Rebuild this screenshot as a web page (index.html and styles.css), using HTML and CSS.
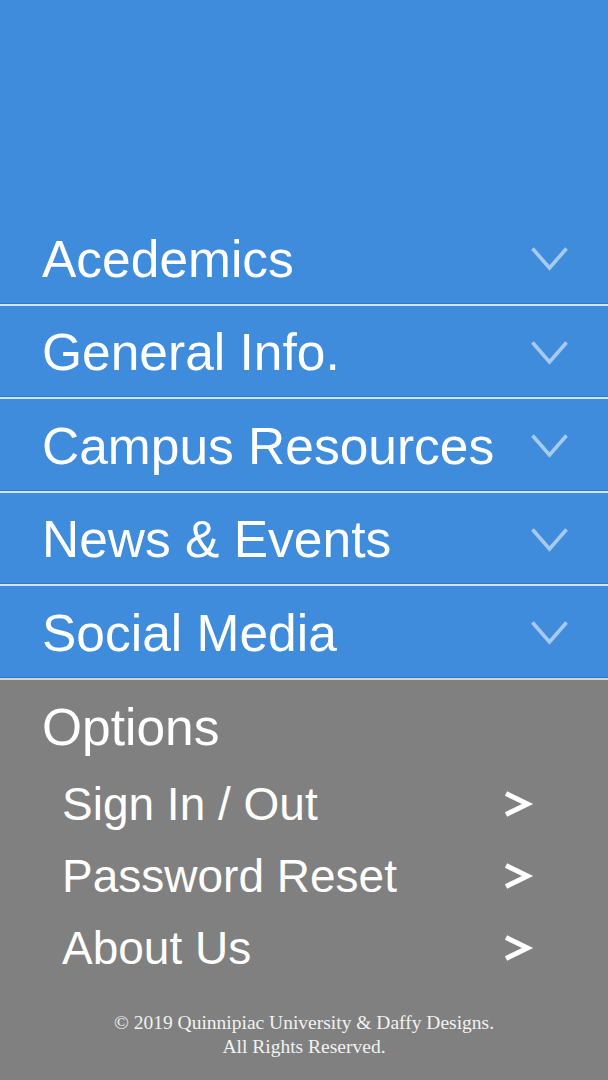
FILE: index.html
```html
<!DOCTYPE html>
<html lang="en">
<head>
<meta charset="utf-8">
<title>Menu</title>
<link rel="stylesheet" href="styles.css">
</head>
<body>
<div class="screen">
  <div class="top-space"></div>
  <nav class="nav">
    <div class="nav-item"><span class="nav-label">Acedemics</span><svg class="chev" viewBox="0 0 39 26" width="39" height="26"><polyline points="2.5,2.5 19.5,22 36.5,2.5"/></svg></div>
    <div class="nav-item"><span class="nav-label">General Info.</span><svg class="chev" viewBox="0 0 39 26" width="39" height="26"><polyline points="2.5,2.5 19.5,22 36.5,2.5"/></svg></div>
    <div class="nav-item"><span class="nav-label">Campus Resources</span><svg class="chev" viewBox="0 0 39 26" width="39" height="26"><polyline points="2.5,2.5 19.5,22 36.5,2.5"/></svg></div>
    <div class="nav-item"><span class="nav-label">News &amp; Events</span><svg class="chev" viewBox="0 0 39 26" width="39" height="26"><polyline points="2.5,2.5 19.5,22 36.5,2.5"/></svg></div>
    <div class="nav-item"><span class="nav-label">Social Media</span><svg class="chev" viewBox="0 0 39 26" width="39" height="26"><polyline points="2.5,2.5 19.5,22 36.5,2.5"/></svg></div>
  </nav>
  <section class="options">
    <div class="options-title">Options</div>
    <ul class="option-list">
      <li class="option"><span>Sign In / Out</span><svg class="arrow" viewBox="0 0 30 26" width="30" height="26"><polyline points="2,2.5 23.5,13 2,23.5"/></svg></li>
      <li class="option"><span>Password Reset</span><svg class="arrow" viewBox="0 0 30 26" width="30" height="26"><polyline points="2,2.5 23.5,13 2,23.5"/></svg></li>
      <li class="option"><span>About Us</span><svg class="arrow" viewBox="0 0 30 26" width="30" height="26"><polyline points="2,2.5 23.5,13 2,23.5"/></svg></li>
    </ul>
    <footer class="footer">
      <p>© 2019 Quinnipiac University &amp; Daffy Designs.</p>
      <p>All Rights Reserved.</p>
    </footer>
  </section>
</div>
</body>
</html>
```
FILE: styles.css
```css
html, body {
  margin: 0;
  padding: 0;
}
body {
  width: 608px;
  height: 1080px;
  overflow: hidden;
  background: #808080;
  font-family: "Liberation Sans", Arial, sans-serif;
  color: #ffffff;
}
.screen {
  display: flex;
  flex-direction: column;
  height: 1080px;
}
.top-space {
  height: 212px;
  background: #3e8cdb;
}
.nav {
  display: flex;
  flex-direction: column;
  background: #3e8cdb;
}
.nav-item {
  height: 86.5px;
  display: flex;
  align-items: center;
  justify-content: space-between;
  padding: 4px 39px 0 42px;
  border-bottom: 1px solid #2a7acd;
}
.nav-item + .nav-item {
  border-top: 2px solid #d3e5f7;
}
.nav-label {
  font-size: 51.5px;
  line-height: 1;
  white-space: nowrap;
}
.chev {
  display: block;
  overflow: visible;
}
.chev polyline {
  fill: none;
  stroke: #a9caef;
  stroke-width: 3.6;
  stroke-linecap: butt;
  stroke-linejoin: miter;
}
.options {
  flex: 1;
  background: #808080;
  border-top: 2px solid #d2d2d2;
  padding-top: 21px;
}
.options-title {
  padding-left: 42px;
  font-size: 51.5px;
  line-height: 52px;
  height: 52px;
}
.option-list {
  list-style: none;
  margin: 15px 0 0;
  padding: 0;
}
.option {
  height: 72px;
  display: flex;
  align-items: center;
  justify-content: space-between;
  padding: 0 74px 0 62px;
  font-size: 46px;
  line-height: 72px;
}
.arrow {
  display: block;
  overflow: visible;
}
.arrow polyline {
  fill: none;
  stroke: #ffffff;
  stroke-width: 5;
  stroke-linecap: butt;
  stroke-linejoin: miter;
}
.footer {
  margin-top: 27px;
  text-align: center;
  font-family: "Liberation Serif", "Times New Roman", serif;
  font-size: 19.5px;
  line-height: 24px;
  color: #f2f2f2;
}
.footer p {
  margin: 0;
}
```
